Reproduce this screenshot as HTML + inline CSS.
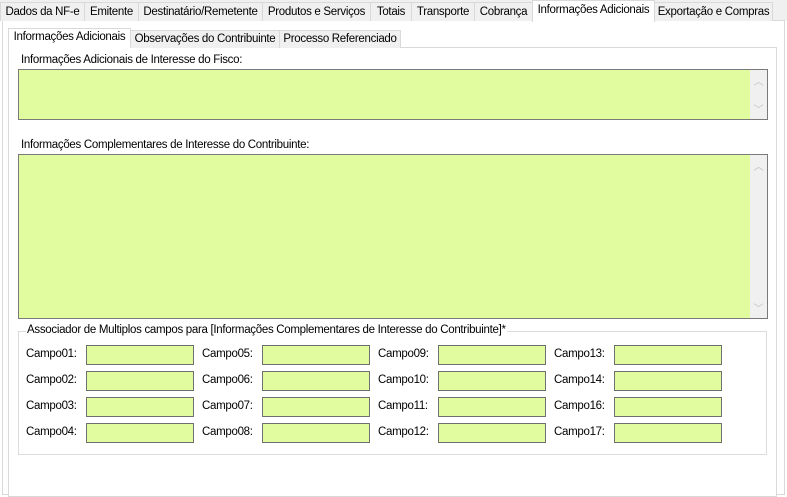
<!DOCTYPE html><html><head><style>
body{margin:0;width:787px;height:491px;background:#fff;font-family:"Liberation Sans",sans-serif;font-size:11.5px;color:#000;position:relative;overflow:hidden;letter-spacing:-0.3px}
.a{position:absolute;box-sizing:border-box}
.t{position:absolute;top:2px;height:19px;background:#f0f0f0;border:1px solid #d9d9d9;border-bottom:none;box-sizing:border-box;text-align:center;line-height:18px;white-space:nowrap}
.it{position:absolute;top:30px;height:18px;background:#f0f0f0;border:1px solid #d9d9d9;border-bottom:none;box-sizing:border-box;text-align:center;line-height:17px;white-space:nowrap}
.ta{position:absolute;border:1px solid #7a7a7a;box-sizing:border-box;background:#e1fb9f}
.sb{position:absolute;right:0;top:0;bottom:0;width:17px;background:#f0f0f0;color:#c0c0c0;font-size:10px;text-align:center}
.f{position:absolute;width:108px;height:20px;background:#e1fb9f;border:1px solid #6f6f6f;box-sizing:border-box}
.l{position:absolute;white-space:nowrap}
</style></head><body>
<div class="a" style="left:0;top:0;width:787px;height:21px;background:#f0f0f0"></div>
<div class="a" style="left:2px;top:20px;width:783px;height:475px;border:1px solid #d9d9d9;background:#fff"></div>
<div class="t" style="left:0;width:85px">Dados da NF-e</div>
<div class="t" style="left:84px;width:55px">Emitente</div>
<div class="t" style="left:138px;width:125px">Destinatário/Remetente</div>
<div class="t" style="left:262px;width:109px">Produtos e Serviços</div>
<div class="t" style="left:370px;width:42px">Totais</div>
<div class="t" style="left:411px;width:64px">Transporte</div>
<div class="t" style="left:474px;width:59px">Cobrança</div>
<div class="t" style="left:532px;top:0;height:22px;width:123px;background:#fff;line-height:18px;z-index:2">Informações Adicionais</div>
<div class="t" style="left:654px;width:119px">Exportação e Compras</div>
<div class="a" style="left:8px;top:47px;width:769px;height:450px;border:1px solid #d9d9d9;background:#fff"></div>
<div class="it" style="left:8px;top:28px;height:20px;width:123px;background:#fff;z-index:2">Informações Adicionais</div>
<div class="it" style="left:130px;width:150px">Observações do Contribuinte</div>
<div class="it" style="left:279px;width:122px">Processo Referenciado</div>
<div class="l" style="left:21px;top:54px">Informações Adicionais de Interesse do Fisco:</div>
<div class="ta" style="left:18px;top:69px;width:750px;height:51px"><div class="sb"><div style="margin-top:3px">︿</div><div style="position:absolute;bottom:3px;width:17px">﹀</div></div></div>
<div class="l" style="left:21px;top:139px">Informações Complementares de Interesse do Contribuinte:</div>
<div class="ta" style="left:18px;top:154px;width:750px;height:165px"><div class="sb"><div style="margin-top:3px">︿</div><div style="position:absolute;bottom:3px;width:17px">﹀</div></div></div>
<div class="a" style="left:18px;top:331px;width:749px;height:124px;border:1px solid #dcdcdc"></div>
<div class="l" style="left:26px;top:324px;background:#fff;padding:0 1px">Associador de Multiplos campos para [Informações Complementares de Interesse do Contribuinte]*</div>
<div class="l" style="left:26px;top:348px">Campo01:</div><div class="f" style="left:86px;top:345px"></div>
<div class="l" style="left:26px;top:374px">Campo02:</div><div class="f" style="left:86px;top:371px"></div>
<div class="l" style="left:26px;top:400px">Campo03:</div><div class="f" style="left:86px;top:397px"></div>
<div class="l" style="left:26px;top:426px">Campo04:</div><div class="f" style="left:86px;top:423px"></div>
<div class="l" style="left:202px;top:348px">Campo05:</div><div class="f" style="left:262px;top:345px"></div>
<div class="l" style="left:202px;top:374px">Campo06:</div><div class="f" style="left:262px;top:371px"></div>
<div class="l" style="left:202px;top:400px">Campo07:</div><div class="f" style="left:262px;top:397px"></div>
<div class="l" style="left:202px;top:426px">Campo08:</div><div class="f" style="left:262px;top:423px"></div>
<div class="l" style="left:378px;top:348px">Campo09:</div><div class="f" style="left:438px;top:345px"></div>
<div class="l" style="left:378px;top:374px">Campo10:</div><div class="f" style="left:438px;top:371px"></div>
<div class="l" style="left:378px;top:400px">Campo11:</div><div class="f" style="left:438px;top:397px"></div>
<div class="l" style="left:378px;top:426px">Campo12:</div><div class="f" style="left:438px;top:423px"></div>
<div class="l" style="left:554px;top:348px">Campo13:</div><div class="f" style="left:614px;top:345px"></div>
<div class="l" style="left:554px;top:374px">Campo14:</div><div class="f" style="left:614px;top:371px"></div>
<div class="l" style="left:554px;top:400px">Campo16:</div><div class="f" style="left:614px;top:397px"></div>
<div class="l" style="left:554px;top:426px">Campo17:</div><div class="f" style="left:614px;top:423px"></div>
</body></html>
